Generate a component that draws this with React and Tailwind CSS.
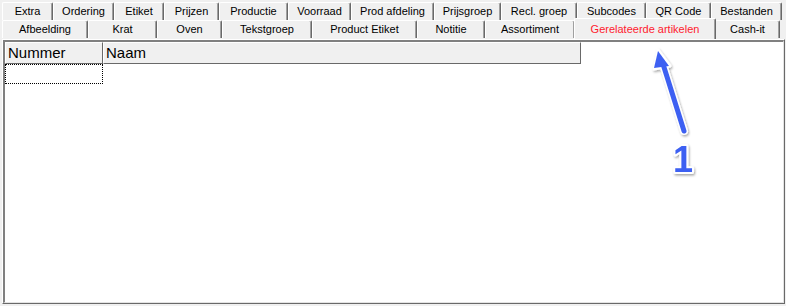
const rowOne = [
  { label: 'Extra', w: 'w-[51px]' },
  { label: 'Ordering', w: 'w-[61px]' },
  { label: 'Etiket', w: 'w-[50px]' },
  { label: 'Prijzen', w: 'w-[55px]' },
  { label: 'Productie', w: 'w-[69px]' },
  { label: 'Voorraad', w: 'w-[63px]' },
  { label: 'Prod afdeling', w: 'w-[83px]' },
  { label: 'Prijsgroep', w: 'w-[67px]' },
  { label: 'Recl. groep', w: 'w-[76px]' },
  { label: 'Subcodes', w: 'w-[69px]' },
  { label: 'QR Code', w: 'w-[65px]' },
  { label: 'Bestanden', w: 'w-[71px]' },
];

const rowTwo = [
  { label: 'Afbeelding', w: 'w-[86px]' },
  { label: 'Krat', w: 'w-[69px]' },
  { label: 'Oven', w: 'w-[65px]' },
  { label: 'Tekstgroep', w: 'w-[90px]' },
  { label: 'Product Etiket', w: 'w-[105px]' },
  { label: 'Notitie', w: 'w-[68px]' },
  { label: 'Assortiment', w: 'w-[90px]' },
  { label: 'Gerelateerde artikelen', w: 'w-[142px]', active: true },
  { label: 'Cash-it', w: 'w-[65px]' },
];

function Tab({ label, w, active }) {
  if (active) {
    return (
      <div
        className={`${w} relative z-10 -mx-[1px] -mt-[2px] h-[21px] flex items-center justify-center bg-[#f0f0f0] border-t border-l border-white border-r border-r-[#696969] shadow-[inset_-1px_0_0_#a0a0a0] rounded-t-[2px] text-[#ff1a2e]`}
      >
        {label}
      </div>
    );
  }
  return (
    <div
      className={`${w} h-[18px] flex items-center justify-center bg-[#f0f0f0] border-t border-l border-white border-r border-r-[#696969] shadow-[inset_-1px_0_0_#a0a0a0] rounded-t-[2px] text-black`}
    >
      {label}
    </div>
  );
}

function Annotation() {
  return (
    <svg className="absolute left-0 top-0 pointer-events-none" width="786" height="306">
      <defs>
        <filter id="sh" x="-50%" y="-50%" width="200%" height="200%">
          <feDropShadow dx="1" dy="1.5" stdDeviation="1.2" floodColor="#000" floodOpacity="0.35" />
        </filter>
      </defs>
      <g filter="url(#sh)">
        <line x1="684" y1="131" x2="663" y2="64" stroke="#ffffff" strokeWidth="8" strokeLinecap="round" />
        <polygon points="658,50 670,66 654,69" fill="#ffffff" stroke="#ffffff" strokeWidth="3" strokeLinejoin="round" />
        <line x1="684" y1="131" x2="663" y2="64" stroke="#3e60f2" strokeWidth="5" strokeLinecap="round" />
        <polygon points="658,51 669,66 654,68" fill="#3e60f2" />
        <text
          x="683"
          y="172"
          textAnchor="middle"
          fontFamily="'Liberation Sans', Arial, sans-serif"
          fontWeight="bold"
          fontSize="36"
          fill="#3e60f2"
          stroke="#ffffff"
          strokeWidth="4"
          paintOrder="stroke"
          strokeLinejoin="round"
        >
          1
        </text>
      </g>
    </svg>
  );
}

export default function App() {
  return (
    <div className="relative w-[786px] h-[306px] bg-[#f0f0f0] overflow-hidden text-[11px] font-['Liberation_Sans',Arial,sans-serif]">
      <div className="pt-[2px] pl-[2px]">
        <div className="flex">
          {rowOne.map((t) => (
            <Tab key={t.label} {...t} />
          ))}
        </div>
        <div className="flex">
          {rowTwo.map((t) => (
            <Tab key={t.label} {...t} />
          ))}
        </div>
      </div>
      <div className="ml-[2px] w-[783px] h-[265px] border-t border-l border-white border-r border-b border-r-[#696969] border-b-[#696969]">
        <div className="w-full h-full bg-white border-t-2 border-l-2 border-t-[#808080] border-l-[#808080] border-r border-b border-r-[#e3e3e3] border-b-[#e3e3e3]">
          <div className="flex">
            <div className="w-[98px] h-[22px] flex items-center pl-[2px] bg-[#f0f0f0] border-t border-l border-white border-r border-b border-r-[#696969] border-b-[#696969] text-[15px] text-black">
              Nummer
            </div>
            <div className="w-[478px] h-[22px] flex items-center pl-[2px] bg-[#f0f0f0] border-t border-l border-white border-r border-b border-r-[#696969] border-b-[#696969] text-[15px] text-black">
              Naam
            </div>
          </div>
          <div className="w-[98px] h-[20px] border border-dotted border-black" />
        </div>
      </div>
      <Annotation />
    </div>
  );
}
